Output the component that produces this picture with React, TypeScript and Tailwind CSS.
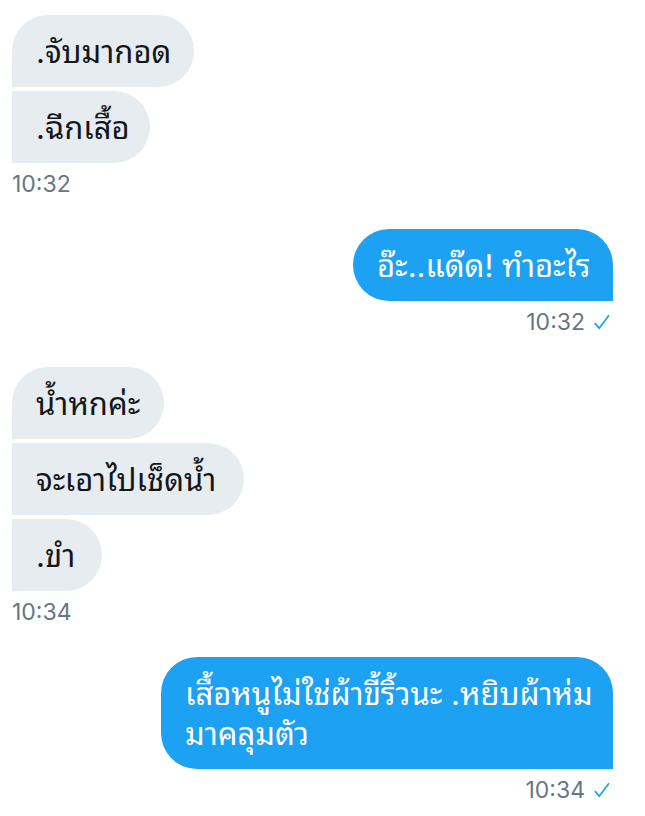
import clsx from 'clsx'

type Message = {
  text: string
  width: string
}

type Group = {
  time: string
  sent: boolean
  messages: Message[]
}

const groups: Group[] = [
  {
    time: '10:32',
    sent: false,
    messages: [
      { text: '.จับมากอด', width: 'w-[182px]' },
      { text: '.ฉีกเสื้อ', width: 'w-[138px]' },
    ],
  },
  {
    time: '10:32',
    sent: true,
    messages: [{ text: 'อ๊ะ..แด๊ด! ทำอะไร', width: 'w-[260px]' }],
  },
  {
    time: '10:34',
    sent: false,
    messages: [
      { text: 'น้ำหกค่ะ', width: 'w-[152px]' },
      { text: 'จะเอาไปเช็ดน้ำ', width: 'w-[232px]' },
      { text: '.ขำ', width: 'w-[90px]' },
    ],
  },
  {
    time: '10:34',
    sent: true,
    messages: [{ text: 'เสื้อหนูไม่ใช่ผ้าขี้ริ้วนะ .หยิบผ้าห่มมาคลุมตัว', width: 'w-[452px]' }],
  },
]

function Check() {
  return (
    <svg className="h-5 w-5" viewBox="0 0 20 20" fill="none" stroke="#1da1f2" strokeWidth="1.8" role="img" aria-label="Sent">
      <path d="M1.8 11.2l4.4 5L16 3.2" />
    </svg>
  )
}

function Bubble({ text, width, sent, first }: Message & { sent: boolean; first: boolean }) {
  return (
    <p
      className={clsx(
        'max-w-full pt-[17px] pr-4 pb-[15px] pl-6 text-[31px] leading-10',
        width,
        sent
          ? 'rounded-[36px] rounded-br-none bg-[#1da1f2] text-white'
          : 'rounded-r-[36px] bg-[#e6ecf0] text-[#14171a]',
        !sent && first && 'rounded-tl-[36px]',
      )}
    >
      {text}
    </p>
  )
}

export default function App() {
  return (
    <main
      lang="th"
      className="flex flex-col gap-7 bg-white py-[15px] pr-8 pl-3 font-['Inter','Noto_Sans_Thai_Looped','Loma','Garuda','Waree','Sarabun','Noto_Sans_Thai',sans-serif]"
    >
      {groups.map((group, i) => (
        <section key={i} className={clsx('flex flex-col gap-1', group.sent ? 'items-end' : 'items-start')}>
          {group.messages.map((message, j) => (
            <Bubble key={message.text} {...message} sent={group.sent} first={j === 0} />
          ))}
          <div className="flex h-[34px] items-center gap-2 text-[23px] text-[#657786]">
            <time>{group.time}</time>
            {group.sent && <Check />}
          </div>
        </section>
      ))}
    </main>
  )
}
